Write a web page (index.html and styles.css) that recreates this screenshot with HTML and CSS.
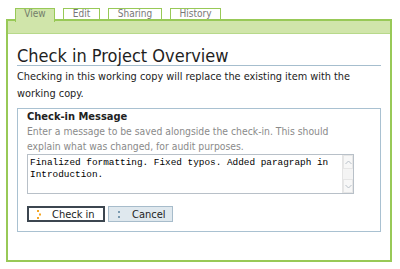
FILE: index.html
```html
<!DOCTYPE html>
<html>
<head>
<meta charset="utf-8">
<link rel="stylesheet" href="styles.css">
</head>
<body>
<div class="page">
  <ul class="tabs">
    <li class="tab active">View</li>
    <li class="tab">Edit</li>
    <li class="tab">Sharing</li>
    <li class="tab">History</li>
  </ul>
  <div class="frame">
    <div class="bar"></div>
    <div class="content">
      <h1 class="title">Check in Project Overview</h1>
      <p class="intro">Checking in this working copy will replace the existing item with the working copy.</p>
      <div class="box">
        <h2 class="box-title">Check-in Message</h2>
        <p class="hint">Enter a message to be saved alongside the check-in. This should explain what was changed, for audit purposes.</p>
        <div class="field">
          <textarea class="input" rows="2">Finalized formatting. Fixed typos. Added paragraph in Introduction.</textarea>
          <div class="scrollbar">
            <span class="sb-btn"><svg width="7" height="5" viewBox="0 0 7 5"><path d="M0.5 4 L3.5 1 L6.5 4" fill="none" stroke="#b8c0c8" stroke-width="1"/></svg></span>
            <span class="sb-track"></span>
            <span class="sb-btn"><svg width="7" height="5" viewBox="0 0 7 5"><path d="M0.5 1 L3.5 4 L6.5 1" fill="none" stroke="#b8c0c8" stroke-width="1"/></svg></span>
          </div>
        </div>
        <div class="buttons">
          <button class="btn primary"><svg class="ico" width="5" height="9" viewBox="0 0 5 9"><rect x="0" y="0" width="2" height="2" fill="#f5a623"/><rect x="2" y="3.5" width="2" height="2" fill="#f5a623"/><rect x="0" y="7" width="2" height="2" fill="#f5a623"/></svg><span>Check in</span></button>
          <button class="btn secondary"><svg class="ico" width="5" height="9" viewBox="0 0 5 9"><rect x="1" y="1" width="2" height="2" fill="#7a9ab0"/><rect x="1" y="6" width="2" height="2" fill="#7a9ab0"/></svg><span>Cancel</span></button>
        </div>
      </div>
    </div>
  </div>
</div>
</body>
</html>
```

FILE: styles.css
```css
* { box-sizing: border-box; }
html, body { margin: 0; padding: 0; background: #fff; }
body {
  font-family: "DejaVu Sans Condensed", "DejaVu Sans", Verdana, sans-serif;
  color: #222;
  width: 400px;
  height: 269px;
  overflow: hidden;
}
.page { padding: 8px 8px 0 6px; }

.tabs {
  list-style: none;
  margin: 0 0 0 9px;
  padding: 0;
  display: flex;
  gap: 8px;
  height: 11px;
  align-items: flex-start;
}
.tab {
  height: 11px;
  border: 1px solid #98c957;
  border-bottom: none;
  background: #fff;
  color: #777;
  font-size: 10px;
  line-height: 10px;
  text-align: center;
}
.tab:nth-child(1) { width: 40px; }
.tab:nth-child(2) { width: 37px; }
.tab:nth-child(3) { width: 54px; }
.tab:nth-child(4) { width: 51px; }
.tab.active {
  background: #d0e5aa;
  height: 14px;
  position: relative;
  z-index: 1;
  color: #737d6a;
}

.frame {
  width: 386px;
  height: 243px;
  border: 2px solid #98c957;
  display: flex;
  flex-direction: column;
}
.bar {
  height: 13px;
  background: #d0e5aa;
  border-bottom: 1px solid #b7d98a;
  flex: none;
}
.content { padding: 0 9px 0 9px; }

.title {
  margin: 13px 0 0 0;
  font-size: 18px;
  font-weight: normal;
  line-height: 18px;
  color: #1e1e1e;
  padding-bottom: 0;
  border-bottom: 1px solid #a6bece;
}
.intro {
  margin: 2px 0 0 0;
  font-size: 10.85px;
  line-height: 17px;
  color: #222;
}
.box {
  margin-top: 6px;
  width: 364px;
  height: 124px;
  border: 1px solid #a9c1d1;
  padding: 0 9px 0 9px;
}
.box-title {
  margin: 0;
  font-size: 11px;
  font-weight: bold;
  line-height: 15px;
  color: #222;
}
.hint {
  margin: 0;
  max-width: 312px;
  font-size: 10.3px;
  line-height: 15px;
  color: #8a8a8a;
}
.field {
  margin-top: 0;
  width: 327px;
  height: 40px;
  border: 1px solid #b8c0c8;
  display: flex;
  background: #fff;
}
.input {
  flex: 1;
  border: none;
  resize: none;
  overflow: hidden;
  margin: 0;
  padding: 2px 2px 0 2px;
  font-family: "Liberation Mono", "Courier New", monospace;
  font-size: 9.4px;
  line-height: 12px;
  color: #000;
  background: #fff;
  outline: none;
}
.scrollbar {
  width: 11px;
  display: flex;
  flex-direction: column;
  background: #f4f4f4;
  border-left: 1px solid #e4e4e4;
}
.sb-btn {
  height: 14px;
  display: flex;
  align-items: center;
  justify-content: center;
  background: #f7f7f7;
  border: 1px solid #e6e6e6;
}
.sb-track { flex: 1; }

.buttons {
  margin-top: 12px;
  display: flex;
  gap: 3px;
}
.btn {
  height: 16px;
  margin: 0;
  padding: 0 0 0 8px;
  display: flex;
  align-items: center;
  font-family: "DejaVu Sans Condensed", "DejaVu Sans", Verdana, sans-serif;
  font-size: 11px;
  color: #222;
}
.btn .ico { flex: none; }
.btn.primary {
  width: 78px;
  border: 2px solid #3c4650;
  background: #fff;
}
.btn.primary span { margin-left: 10px; }
.btn.secondary {
  width: 65px;
  border: 1px solid #a7bccb;
  background: #dfe8ee;
}
.btn.secondary span { margin-left: 10px; }
```
